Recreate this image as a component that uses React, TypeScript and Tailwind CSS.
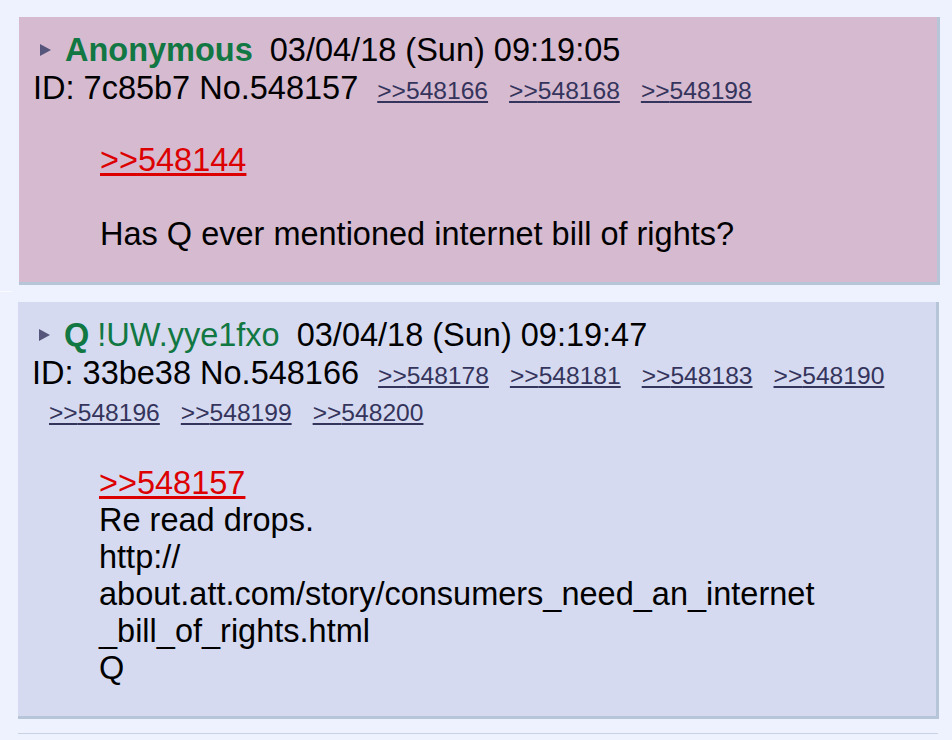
const font = "font-['Liberation_Sans',Arial,sans-serif]"

interface PostProps {
  highlight?: boolean
  name: string
  trip?: string
  date: string
  id: string
  no: string
  backlinks: string[]
  quote: string
  lines: string[]
}

function MenuArrow() {
  return (
    <svg
      viewBox="0 0 11 12"
      className="inline-block w-[11px] h-[12px] ml-[7px] mr-[14px] align-[5px]"
    >
      <polygon points="0,0 11,6 0,12" fill="#56567c" />
    </svg>
  )
}

function Post({ highlight = false, name, trip, date, id, no, backlinks, quote, lines }: PostProps) {
  return (
    <div
      className={`w-[921px] border-r-[3px] border-b-[3px] border-[#b7c5d9] pt-[15px] pl-[14px] pr-[14px] ${
        highlight ? 'ml-[19px] bg-[#d6bad0]' : 'ml-[18px] bg-[#d6daf0]'
      }`}
    >
      {/* Post info */}
      <div className="leading-[37.5px] text-black">
        <div className="whitespace-nowrap">
          <MenuArrow />
          <span className="font-bold text-[#117743]">{name}</span>
          {trip && <span className="ml-[8px] text-[#117743]">{trip}</span>}
          <span className="ml-[17px]">{date}</span>
        </div>
        <div>
          ID: {id} No.{no}
          {backlinks.map((b, i) => (
            <a
              key={b}
              href="#"
              className={`inline-block mr-[4px] text-[24.6px] leading-none underline text-[#34345c] ${
                i === 0 ? 'ml-[19px]' : 'ml-[17px]'
              }`}
            >
              &gt;&gt;{b}
            </a>
          ))}
        </div>
      </div>

      {/* Message */}
      <div className="ml-[67px] mt-[35px] mb-[29px] leading-[37px] text-black">
        <a href="#" className="underline text-[#dd0000]">
          &gt;&gt;{quote}
        </a>
        {lines.map((l, i) => (
          <div key={i} className="h-[37px] whitespace-nowrap">
            {l}
          </div>
        ))}
      </div>
    </div>
  )
}

export default function App() {
  return (
    <div className={`min-h-screen bg-[#eef2ff] pt-[17px] text-[32.5px] ${font}`}>
      <Post
        highlight
        name="Anonymous"
        date="03/04/18 (Sun) 09:19:05"
        id="7c85b7"
        no="548157"
        backlinks={['548166', '548168', '548198']}
        quote="548144"
        lines={['', 'Has Q ever mentioned internet bill of rights?']}
      />

      <div className="h-[17px] pt-[6px]">
        <div className="w-[12px] h-px bg-[#fafbff]" />
      </div>

      <Post
        name="Q"
        trip="!UW.yye1fxo"
        date="03/04/18 (Sun) 09:19:47"
        id="33be38"
        no="548166"
        backlinks={['548178', '548181', '548183', '548190', '548196', '548199', '548200']}
        quote="548157"
        lines={[
          'Re read drops.',
          'http://',
          'about.att.com/story/consumers_need_an_internet',
          '_bill_of_rights.html',
          'Q',
        ]}
      />

      <hr className="mt-[14px] ml-[18px] w-[920px] border-0 border-t border-[#c9d2e3]" />
    </div>
  )
}
